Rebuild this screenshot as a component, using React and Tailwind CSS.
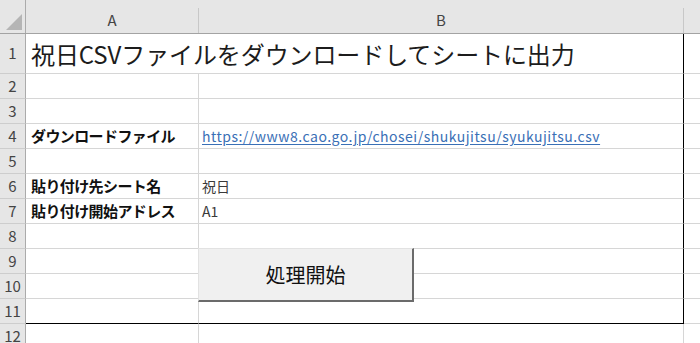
import React from "react";

const font = { fontFamily: '"Noto Sans CJK JP", "Noto Sans", sans-serif' };

const rows = [
  { n: 1, h: "h-[40px]", title: "祝日CSVファイルをダウンロードしてシートに出力" },
  { n: 2 },
  { n: 3 },
  { n: 4, label: "ダウンロードファイル", link: "https://www8.cao.go.jp/chosei/shukujitsu/syukujitsu.csv" },
  { n: 5 },
  { n: 6, label: "貼り付け先シート名", value: "祝日" },
  { n: 7, label: "貼り付け開始アドレス", value: "A1" },
  { n: 8 },
  { n: 9 },
  { n: 10 },
  { n: 11, last: true },
  { n: 12, after: true },
];

function RowHead({ n, h }) {
  return (
    <div className={`${h} w-[26px] shrink-0 flex items-center justify-center bg-[#e6e6e6] border-r border-b border-r-[#ababab] border-b-[#cdcdcd] text-[15px] text-[#444]`}>
      {n}
    </div>
  );
}

function Row({ r }) {
  const h = r.h || "h-[25px]";
  const bottom = r.last ? "border-b-black" : "border-b-[#d6d6d6]";
  const rightB = r.after ? "border-r-[#d6d6d6]" : "border-r-black";

  if (r.title) {
    return (
      <div className="flex">
        <RowHead n={r.n} h={h} />
        <div className={`${h} w-[658px] shrink-0 flex items-center pl-[5px] border-r border-b ${rightB} ${bottom} text-[24px] text-[#1c1c1c] whitespace-nowrap tracking-[-0.1px]`}>
          {r.title}
        </div>
        <div className={`${h} flex-1 border-b border-b-[#d6d6d6]`} />
      </div>
    );
  }

  return (
    <div className="flex">
      <RowHead n={r.n} h={h} />
      <div className={`${h} w-[173px] shrink-0 flex items-center pl-[5px] border-r border-b border-r-[#d6d6d6] ${bottom} text-[15px] font-bold text-[#111] tracking-[-0.6px] whitespace-nowrap`}>
        {r.label}
      </div>
      <div className={`${h} w-[485px] shrink-0 flex items-center pl-[3px] border-r border-b ${rightB} ${bottom} text-[14px] text-[#3a3a3a] whitespace-nowrap`}>
        {r.link ? (
          <a href="#" className="text-[#3a70b6] underline underline-offset-2 tracking-[0.5px]">{r.link}</a>
        ) : (
          r.value
        )}
      </div>
      <div className={`${h} flex-1 border-b border-b-[#d6d6d6]`} />
    </div>
  );
}

export default function App() {
  return (
    <div className="relative w-[700px] h-[343px] overflow-hidden bg-white" style={font}>
      {/* column headers */}
      <div className="flex h-[34px] bg-[#e6e6e6] border-b border-b-[#a3a3a3]">
        <div className="w-[26px] shrink-0 flex items-end justify-end pr-[3px] pb-[3px] border-r border-r-[#ababab]">
          <svg width="16" height="16" viewBox="0 0 16 16">
            <polygon points="16,0 16,16 0,16" fill="#b5b5b5" />
          </svg>
        </div>
        <div className="w-[173px] shrink-0 flex flex-col">
          <div className="h-[8px]" />
          <div className="flex-1 flex items-center justify-center border-r border-r-[#c8c8c8] text-[15px] text-[#444]">A</div>
        </div>
        <div className="w-[485px] shrink-0 flex flex-col">
          <div className="h-[8px]" />
          <div className="flex-1 flex items-center justify-center border-r border-r-[#c8c8c8] text-[15px] text-[#444]">B</div>
        </div>
        <div className="flex-1" />
      </div>

      {rows.map((r) => (
        <Row key={r.n} r={r} />
      ))}

      {/* form button */}
      <button className="absolute left-[198px] top-[248px] w-[216px] h-[54px] bg-[#f0f0f0] border-t border-l border-t-[#e2e2e2] border-l-[#e2e2e2] border-r-2 border-b-2 border-r-[#6b6b6b] border-b-[#6b6b6b] text-[20px] text-[#111] flex items-center justify-center">
        処理開始
      </button>
    </div>
  );
}
